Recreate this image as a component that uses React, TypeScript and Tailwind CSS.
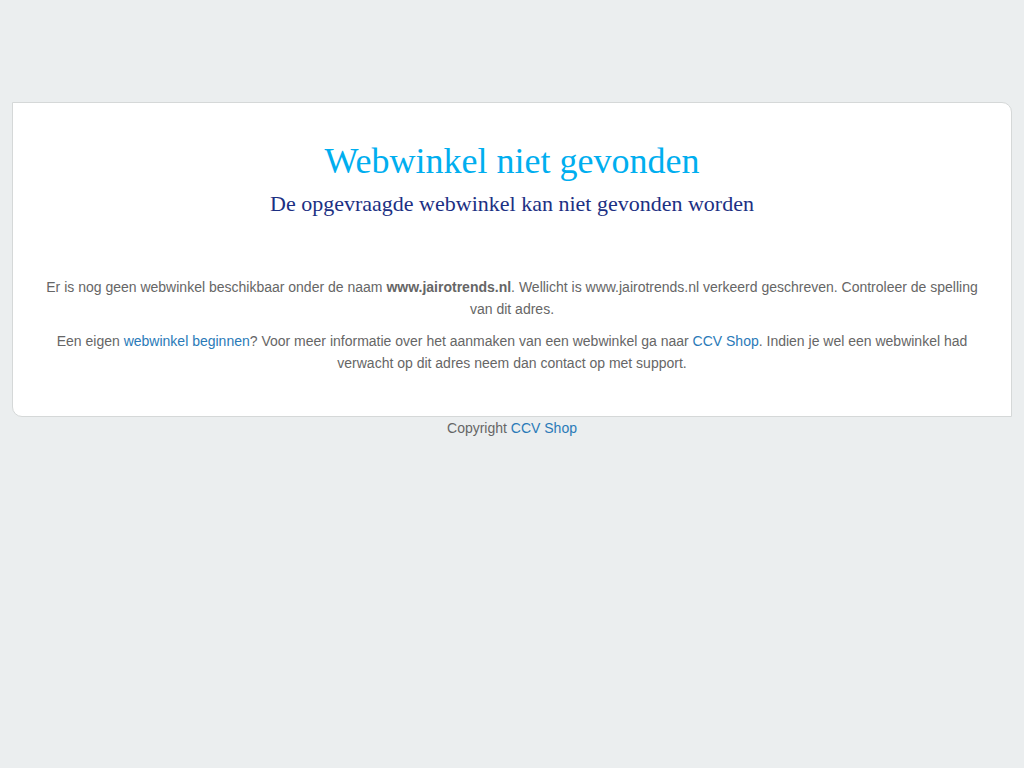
import React from 'react';

export default function App() {
  return (
    <div className="min-h-[768px] bg-[#ebeeef] pt-[102px] font-['Liberation_Sans',Arial,sans-serif]">
      {/* Card */}
      <div className="mx-[12px] w-[1000px] bg-white border border-[#d5d8d8] rounded-tr-[10px] rounded-bl-[10px] px-[30px] pt-[36px] pb-[42px] text-center">
        <h1 className="font-['Liberation_Serif','Times_New_Roman',serif] text-[36px] leading-[44px] text-[#00aeef]">
          Webwinkel niet gevonden
        </h1>
        <h2 className="font-['Liberation_Serif','Times_New_Roman',serif] text-[22px] leading-[26px] text-[#1c3083] mt-[8px]">
          De opgevraagde webwinkel kan niet gevonden worden
        </h2>

        <div className="mt-[59px] text-[14px] leading-[22px] text-[#666666]">
          <p>
            Er is nog geen webwinkel beschikbaar onder de naam <b>www.jairotrends.nl</b>. Wellicht is
            www.jairotrends.nl verkeerd geschreven. Controleer de spelling van dit adres.
          </p>
          <p className="mt-[10px]">
            Een eigen <a className="text-[#2a7ab8]">webwinkel beginnen</a>? Voor meer informatie over het
            aanmaken van een webwinkel ga naar <a className="text-[#2a7ab8]">CCV Shop</a>. Indien je wel een
            webwinkel had verwacht op dit adres neem dan contact op met support.
          </p>
        </div>
      </div>

      {/* Footer */}
      <div className="mt-[1px] text-center text-[14px] leading-[20px] text-[#666666]">
        Copyright <a className="text-[#2a7ab8]">CCV Shop</a>
      </div>
    </div>
  );
}
